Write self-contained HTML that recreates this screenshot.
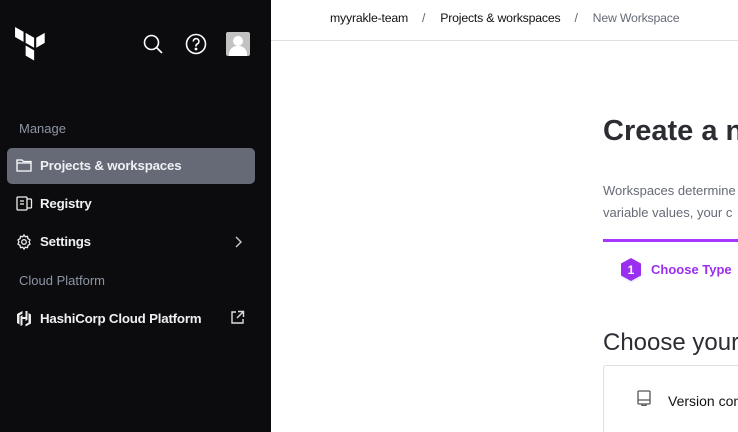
<!DOCTYPE html>
<html style="overflow:hidden"><head><style>
html,body{margin:0;width:738px;height:432px;overflow:hidden}
body{font-family:"Liberation Sans",sans-serif;background:#fff;position:relative}
.sb{position:absolute;left:0;top:0;width:271px;height:432px;background:#0c0c0e;color:#fff}
.a{position:absolute}
.lbl{font-size:13px;color:#8d95a5}
.it{font-size:13.3px;font-weight:bold;color:#eef0f3;letter-spacing:-0.2px}
</style></head><body>
<div class="sb">
<svg class="a" style="left:15px;top:27px" width="34" height="36" viewBox="0 0 32 34"><path fill="#fff" d="M0 0l8 4.5v9.5L0 9.5z M10 5.5l8 4.6v9.5l-8-4.6z M20 10.1l8-4.6v9.5l-8 4.6z M10 17.5l8 4.6v9.5l-8-4.6z"/></svg>
<svg class="a" style="left:142px;top:33px" width="22" height="22" viewBox="0 0 22 22" fill="none" stroke="#fff" stroke-width="1.6"><circle cx="9.5" cy="9.5" r="7"/><path d="M14.5 14.5l5.5 5.5"/></svg>
<svg class="a" style="left:185px;top:33px" width="22" height="22" viewBox="0 0 22 22" fill="none" stroke="#fff" stroke-width="1.6"><circle cx="11" cy="11" r="9.5"/><path d="M8.3 8.5a2.8 2.8 0 1 1 3.9 2.5c-.8.4-1.2 1-1.2 1.9v.6"/><circle cx="11" cy="16" r=".6" fill="#fff"/></svg>
<div class="a" style="left:226px;top:32px;width:24px;height:24px;background:#c2c2c2;border-radius:2px;overflow:hidden"><div class="a" style="left:7px;top:4px;width:10px;height:10px;border-radius:50%;background:#fff"></div><div class="a" style="left:3px;top:14px;width:18px;height:14px;border-radius:8px 8px 0 0;background:#fff"></div></div>
<div class="a lbl" style="left:19px;top:121px">Manage</div>
<div class="a" style="left:7px;top:148px;width:248px;height:36px;background:#656a76;border-radius:5px"></div>
<svg class="a" style="left:16px;top:158px" width="16" height="14" viewBox="0 0 16 14" fill="none" stroke="#fff" stroke-width="1.3"><path d="M1 2h5l1.5 1.5H15V13H1z M1 5h14"/></svg>
<div class="a it" style="left:40px;top:158px">Projects &amp; workspaces</div>
<svg class="a" style="left:16px;top:196px" width="17" height="15" viewBox="0 0 17 15" fill="none" stroke="#eee" stroke-width="1.3"><rect x="1" y="1" width="10" height="13" rx="1"/><path d="M11 3h3.5a1 1 0 0 1 1 1v7a1 1 0 0 1-1 1H11 M4 5h4M4 8h4"/></svg>
<div class="a it" style="left:40px;top:196px">Registry</div>
<svg class="a" style="left:16px;top:234px" width="16" height="16" viewBox="0 0 16 16" fill="none" stroke="#eee" stroke-width="1.3"><circle cx="8" cy="8" r="2.3"/><path d="M8 1l1.3 1.8 2.2-.4.4 2.2L14 6l-.9 2 .9 2-2.1 1.4-.4 2.2-2.2-.4L8 15l-1.3-1.8-2.2.4-.4-2.2L2 10l.9-2L2 6l2.1-1.4.4-2.2 2.2.4z"/></svg>
<div class="a it" style="left:40px;top:234px">Settings</div>
<svg class="a" style="left:233px;top:236px" width="10" height="12" viewBox="0 0 10 12" fill="none" stroke="#ccc" stroke-width="1.4"><path d="M3 1l5 5-5 5"/></svg>
<div class="a lbl" style="left:19px;top:273px">Cloud Platform</div>
<svg class="a" style="left:16px;top:310px" width="16" height="17" viewBox="0 0 16 17" fill="#eee"><path d="M6.5 1L1 4v9l2.5 1.5V5.3L6.5 3.6z M9.5 1v6H6.5V5l-2 1.2v9.8l2-1v-6h3v2l2-1.2V1z M12.5 3l2.5 1.5v9L9.5 16.5v-2.2l3-1.7z"/></svg>
<div class="a it" style="left:40px;top:311px">HashiCorp Cloud Platform</div>
<svg class="a" style="left:230px;top:310px" width="15" height="15" viewBox="0 0 15 15" fill="none" stroke="#ddd" stroke-width="1.4"><path d="M6 2H2v11h11V9 M8 1.5h5.5V7 M13.5 1.5L7 8"/></svg>
</div>
<div class="a" style="left:271px;top:40px;width:467px;height:1px;background:#dedfe3"></div>
<div class="a" style="left:330px;top:11px;font-size:12.3px;color:#111;white-space:nowrap;letter-spacing:-0.2px">myyrakle-team<span style="margin:0 0 0 14px;color:#666">/</span><span style="margin-left:15px">Projects &amp; workspaces</span><span style="margin-left:14px;color:#666">/</span><span style="margin-left:15px;color:#656a76">New Workspace</span></div>
<div class="a" style="left:603px;top:115px;font-size:29px;font-weight:bold;color:#2b2d33;white-space:nowrap">Create a new Workspace</div>
<div class="a" style="left:603px;top:180px;font-size:13px;line-height:22px;color:#656a76;white-space:nowrap">Workspaces determine how HCP Terraform<br>variable values, your c</div>
<div class="a" style="left:603px;top:239px;width:135px;height:3px;background:#a737ff"></div>
<svg class="a" style="left:619px;top:257px" width="24" height="27" viewBox="0 0 24 27"><path fill="#ebf2ff" d="M12 3l10 5.5v12L12 26 2 20.5v-12z"/><path fill="#9b2ff0" d="M12 1l10 5.5v12L12 24 2 18.5v-12z"/><text x="12" y="17" font-size="12" font-weight="bold" fill="#fff" text-anchor="middle" font-family="Liberation Sans">1</text></svg>
<div class="a" style="left:651px;top:262px;font-size:13px;font-weight:bold;color:#9b2ff0;white-space:nowrap">Choose Type</div>
<div class="a" style="left:603px;top:329px;font-size:24px;color:#2b2d33;white-space:nowrap">Choose your workflow</div>
<div class="a" style="left:603px;top:365px;width:140px;height:70px;border:1px solid #dedfe3;border-radius:3px"></div>
<svg class="a" style="left:637px;top:390px" width="14" height="16" viewBox="0 0 14 16" fill="none" stroke="#555" stroke-width="1.3"><rect x="1" y="1" width="12" height="13" rx="1"/><path d="M1 10h12 M5 14v1.5h4V14"/></svg>
<div class="a" style="left:668px;top:393px;font-size:14px;color:#111;white-space:nowrap">Version control workflow</div>
</body></html>
